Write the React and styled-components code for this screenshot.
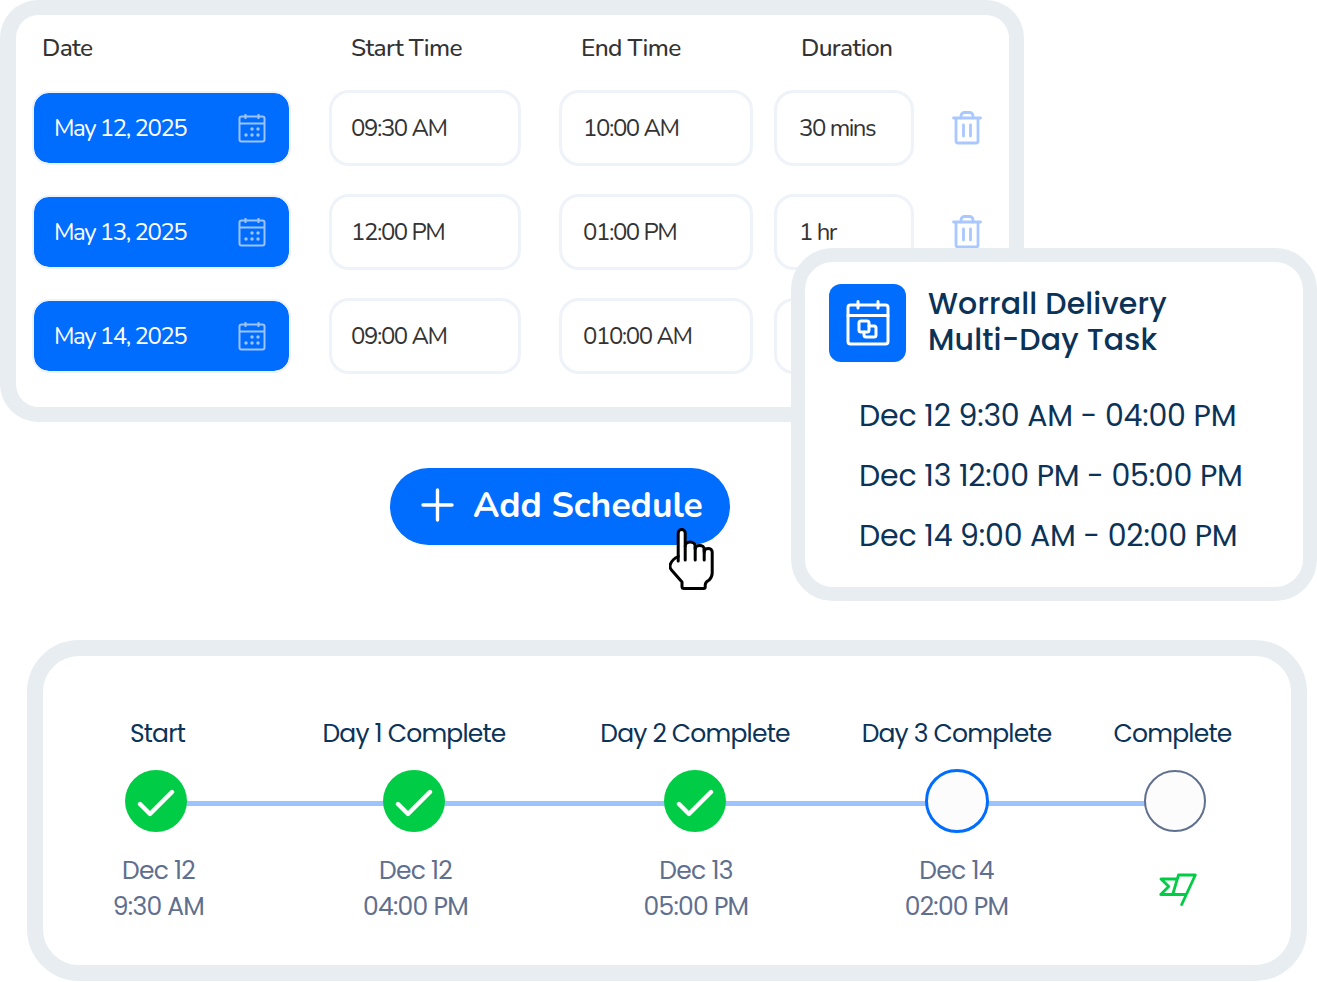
import React from "react";
import styled, { createGlobalStyle } from "styled-components";

const rounded = `"Nunito", "Lato", "Noto Sans", sans-serif`;
const geo = `"Poppins", "Inter", "Noto Sans", sans-serif`;

const GlobalStyle = createGlobalStyle`
  html, body { margin: 0; padding: 0; background: #fff; }
  * { box-sizing: border-box; }
`;

const Page = styled.div`
  position: relative;
  width: 1317px;
  height: 982px;
  overflow: hidden;
`;

const ScheduleCard = styled.section`
  width: 1024px;
  height: 422px;
  padding: 20px 0 0 16px;
  border: 15px solid #e8edf1;
  border-left-width: 16px;
  border-radius: 38px;
  font-family: ${rounded};
`;

const Columns = styled.div`
  display: grid;
  grid-template-columns: 259px 192px 177px 140px 30px;
  column-gap: 38px;
  & > :nth-child(3) { margin-right: -17px; }
`;

const HeaderRow = styled(Columns)`
  height: 26px;
  margin-top: -4px;
  margin-bottom: 33px;
  align-items: center;
`;

const Heading = styled.div`
  padding-left: ${(props) => props.$indent}px;
  font-size: 24.5px;
  font-weight: 500;
  letter-spacing: -0.65px;
  color: #333;
  white-space: nowrap;
`;

const Row = styled(Columns)`
  height: 76px;
  margin-bottom: 28px;
  align-items: center;
`;

const DatePill = styled.div`
  height: 74px;
  display: flex;
  align-items: center;
  justify-content: space-between;
  padding: 0 23px 0 20px;
  background: #006dff;
  background-clip: padding-box;
  border: 2px solid #eef2f9;
  border-radius: 17px;
  font-size: 24px;
  letter-spacing: -1.45px;
  color: #fff;
`;

const TimeBox = styled.div`
  height: 76px;
  display: flex;
  align-items: center;
  padding-left: ${(props) => props.$indent}px;
  border: 3px solid #eef2f9;
  border-radius: 20px;
  font-size: 24px;
  letter-spacing: -1.45px;
  color: #333;
  white-space: nowrap;
`;

const TrashSlot = styled.div`
  display: flex;
  align-items: center;
  justify-content: center;
  width: 30px;
`;

const TaskPopup = styled.aside`
  position: absolute;
  left: 791px;
  top: 248px;
  width: 526px;
  height: 353px;
  padding: 22px 24px 0 24px;
  background: #fff;
  border: 14px solid #e8edf1;
  border-radius: 42px;
  font-family: ${geo};
  color: #0b3358;
`;

const PopupHead = styled.div`
  display: flex;
  align-items: center;
  gap: 22px;
  margin-bottom: 34px;
`;

const IconTile = styled.div`
  width: 77px;
  height: 78px;
  flex: none;
  display: flex;
  align-items: center;
  justify-content: center;
  background: #006dff;
  border-radius: 12px;
`;

const PopupTitle = styled.h2`
  margin: 0;
  padding-bottom: 2px;
  font-size: 30px;
  font-weight: 500;
  line-height: 36px;
  letter-spacing: 0.14px;
`;

const SlotList = styled.div`
  display: flex;
  flex-direction: column;
  gap: 20px;
  padding-left: 30px;
`;

const Slot = styled.div`
  height: 40px;
  line-height: 40px;
  font-size: 30px;
  font-weight: 400;
  letter-spacing: -0.2px;
  white-space: nowrap;
`;

const ActionRow = styled.div`
  position: relative;
  width: 730px;
  margin: 46px 0 95px;
  padding-left: 390px;
`;

const AddButton = styled.button`
  width: 340px;
  height: 77px;
  display: flex;
  align-items: center;
  gap: 19px;
  padding: 0 0 3px 31px;
  border: 0;
  border-radius: 39px;
  background: #006dff;
  color: #fff;
  font-family: ${rounded};
  font-size: 35.5px;
  font-weight: 700;
  white-space: nowrap;
`;

const HandCursor = styled.svg`
  position: absolute;
  left: 669px;
  top: 60px;
`;

const TimelineCard = styled.section`
  position: relative;
  width: 1280px;
  height: 341px;
  margin-left: 27px;
  padding-top: 61px;
  border: 16px solid #e8edf1;
  border-radius: 52px;
  font-family: ${geo};
`;

const Steps = styled.div`
  position: relative;
  display: grid;
  grid-template-columns: 226px 290px 272px 252px 184px;
`;

const Connector = styled.div`
  position: absolute;
  left: 114px;
  top: 84px;
  width: 1018px;
  height: 5px;
  background: #9cc3fb;
`;

const Step = styled.div`
  position: relative;
  display: flex;
  flex-direction: column;
  align-items: center;
`;

const StepLabel = styled.div`
  height: 34px;
  line-height: 34px;
  margin-bottom: 19px;
  margin-left: ${(props) => props.$shift}px;
  font-size: 25px;
  font-weight: 400;
  letter-spacing: -0.8px;
  color: #0b3358;
  white-space: nowrap;
`;

const Dot = styled.div`
  width: ${(props) => (props.$state === "current" ? 64 : 62)}px;
  height: ${(props) => (props.$state === "current" ? 64 : 62)}px;
  margin: ${(props) => (props.$state === "current" ? "-1px 0" : "0")};
  padding-top: ${(props) => (props.$state === "done" ? 3 : 0)}px;
  display: flex;
  align-items: center;
  justify-content: center;
  border-radius: 50%;
  background: ${(props) => (props.$state === "done" ? "#00cc45" : "#fcfcfd")};
  border: ${(props) =>
    props.$state === "done"
      ? "0"
      : props.$state === "current"
        ? "3px solid #006dff"
        : "2.5px solid #5f6f8f"};
`;

const StepDate = styled.div`
  margin-top: 21px;
  margin-left: ${(props) => props.$shift}px;
  font-size: 25px;
  line-height: 36px;
  letter-spacing: -0.75px;
  text-align: center;
  color: #5f6f8f;
  white-space: nowrap;
`;

const FlagWrap = styled.div`
  margin: 39px 0 0 6px;
`;

const DayCalendar = () => (
  <svg width="28" height="30" viewBox="0 0 28 30" fill="none" stroke="#9cc3fb" strokeWidth="2">
    <rect x="1.5" y="3.5" width="25" height="25" rx="2" />
    <path d="M1.5 10.5H26.5M7.5 1V6M20.5 1V6" />
    <g fill="#9cc3fb" stroke="none">
      <circle cx="14" cy="16" r="1.7" />
      <circle cx="20" cy="16" r="1.7" />
      <circle cx="8" cy="22" r="1.7" />
      <circle cx="14" cy="22" r="1.7" />
      <circle cx="20" cy="22" r="1.7" />
    </g>
  </svg>
);

const Trash = () => (
  <svg width="30" height="34" viewBox="0 0 30 34" fill="none" stroke="#a9c8ff" strokeWidth="2.8" strokeLinecap="round" strokeLinejoin="round">
    <path d="M1.5 7H28.5M4 7V30a2 2 0 0 0 2 2H24a2 2 0 0 0 2-2V7" />
    <path d="M9 7V5a3.5 3.5 0 0 1 3.5-3.5h5A3.5 3.5 0 0 1 21 5V7" />
    <path d="M11.5 14V25M18.5 14V25" />
  </svg>
);

const TaskCalendar = () => (
  <svg width="44" height="46" viewBox="0 0 44 46" fill="none" stroke="#fff" strokeWidth="3" strokeLinejoin="round" strokeLinecap="round">
    <rect x="2" y="5" width="40" height="39" rx="2.5" />
    <path d="M2 15.5H42M12 1.5V8M32 1.5V8" />
    <rect x="13" y="21" width="10" height="11" rx="2" />
    <path d="M23 26h5a2 2 0 0 1 2 2v7a2 2 0 0 1-2 2H20a2 2 0 0 1-2-2v-3" />
  </svg>
);

const Plus = () => (
  <svg width="33" height="34" viewBox="0 0 33 34" fill="none" stroke="#fff" strokeWidth="3.4" strokeLinecap="round">
    <path d="M16.5 2V32M2 17H31" />
  </svg>
);

const Hand = () => (
  <HandCursor width="46" height="64" viewBox="0 0 46 64" fill="#fff" stroke="#000" strokeWidth="3" strokeLinejoin="round" strokeLinecap="round">
    <path d="M9.2 5a3.5 3.5 0 0 1 7 0V18a5 4 0 0 1 10 0V21a4.5 3.6 0 0 1 9 0V24a4 3.6 0 0 1 8 0V45q0 4-3 7q-4 2-4 5V59q0 1.5-1.5 1.5H15q-2 0-2-2V54L2.5 42q-2.5-3-1-6q2-5 7.7-7.5Z" />
    <path d="M9.2 28V33M16.2 18V32M26.2 18V32M35.2 21V32" />
  </HandCursor>
);

const Check = () => (
  <svg width="38" height="30" viewBox="0 0 38 30" fill="none" stroke="#fff" strokeWidth="4.4" strokeLinecap="round" strokeLinejoin="round">
    <path d="M3 16L13 26L35 4" />
  </svg>
);

const Flag = () => (
  <svg width="40" height="35" viewBox="0 0 40 35" fill="none" stroke="#00cc45" strokeWidth="2.8" strokeLinecap="round" strokeLinejoin="round">
    <path d="M23.7 33.5L37.3 4H20.5L14.7 23.5H2.7L10.7 15.5L3 8H18.5M14.7 23.5H28" />
  </svg>
);

const rows = [
  { date: "May 12, 2025", start: "09:30 AM", end: "10:00 AM", duration: "30 mins" },
  { date: "May 13, 2025", start: "12:00 PM", end: "01:00 PM", duration: "1 hr" },
  { date: "May 14, 2025", start: "09:00 AM", end: "010:00 AM", duration: "" },
];

const slots = [
  "Dec 12 9:30 AM - 04:00 PM",
  "Dec 13 12:00 PM - 05:00 PM",
  "Dec 14 9:00 AM - 02:00 PM",
];

const steps = [
  { label: "Start", shift: 3, dateShift: 5, state: "done", day: "Dec 12", time: "9:30 AM" },
  { label: "Day 1 Complete", shift: 0, dateShift: 3, state: "done", day: "Dec 12", time: "04:00 PM" },
  { label: "Day 2 Complete", shift: 0, dateShift: 2, state: "done", day: "Dec 13", time: "05:00 PM" },
  { label: "Day 3 Complete", shift: -1, dateShift: -1, state: "current", day: "Dec 14", time: "02:00 PM" },
  { label: "Complete", shift: -5, state: "todo" },
];

const App = () => (
  <Page>
    <GlobalStyle />
    <ScheduleCard>
      <HeaderRow>
        <Heading $indent={10}>Date</Heading>
        <Heading $indent={22}>Start Time</Heading>
        <Heading $indent={22}>End Time</Heading>
        <Heading $indent={27}>Duration</Heading>
      </HeaderRow>
      {rows.map((row) => (
        <Row key={row.date}>
          <DatePill>
            {row.date}
            <DayCalendar />
          </DatePill>
          <TimeBox $indent={19}>{row.start}</TimeBox>
          <TimeBox $indent={21}>{row.end}</TimeBox>
          <TimeBox $indent={22}>{row.duration}</TimeBox>
          <TrashSlot>
            <Trash />
          </TrashSlot>
        </Row>
      ))}
    </ScheduleCard>

    <TaskPopup>
      <PopupHead>
        <IconTile>
          <TaskCalendar />
        </IconTile>
        <PopupTitle>
          Worrall Delivery
          <br />
          Multi-Day Task
        </PopupTitle>
      </PopupHead>
      <SlotList>
        {slots.map((slot) => (
          <Slot key={slot}>{slot}</Slot>
        ))}
      </SlotList>
    </TaskPopup>

    <ActionRow>
      <AddButton>
        <Plus />
        Add Schedule
      </AddButton>
      <Hand />
    </ActionRow>

    <TimelineCard>
      <Steps>
        <Connector />
        {steps.map((step) => (
          <Step key={step.label}>
            <StepLabel $shift={step.shift}>{step.label}</StepLabel>
            <Dot $state={step.state}>{step.state === "done" && <Check />}</Dot>
            {step.day ? (
              <StepDate $shift={step.dateShift}>
                {step.day}
                <br />
                {step.time}
              </StepDate>
            ) : (
              <FlagWrap>
                <Flag />
              </FlagWrap>
            )}
          </Step>
        ))}
      </Steps>
    </TimelineCard>
  </Page>
);

export default App;
